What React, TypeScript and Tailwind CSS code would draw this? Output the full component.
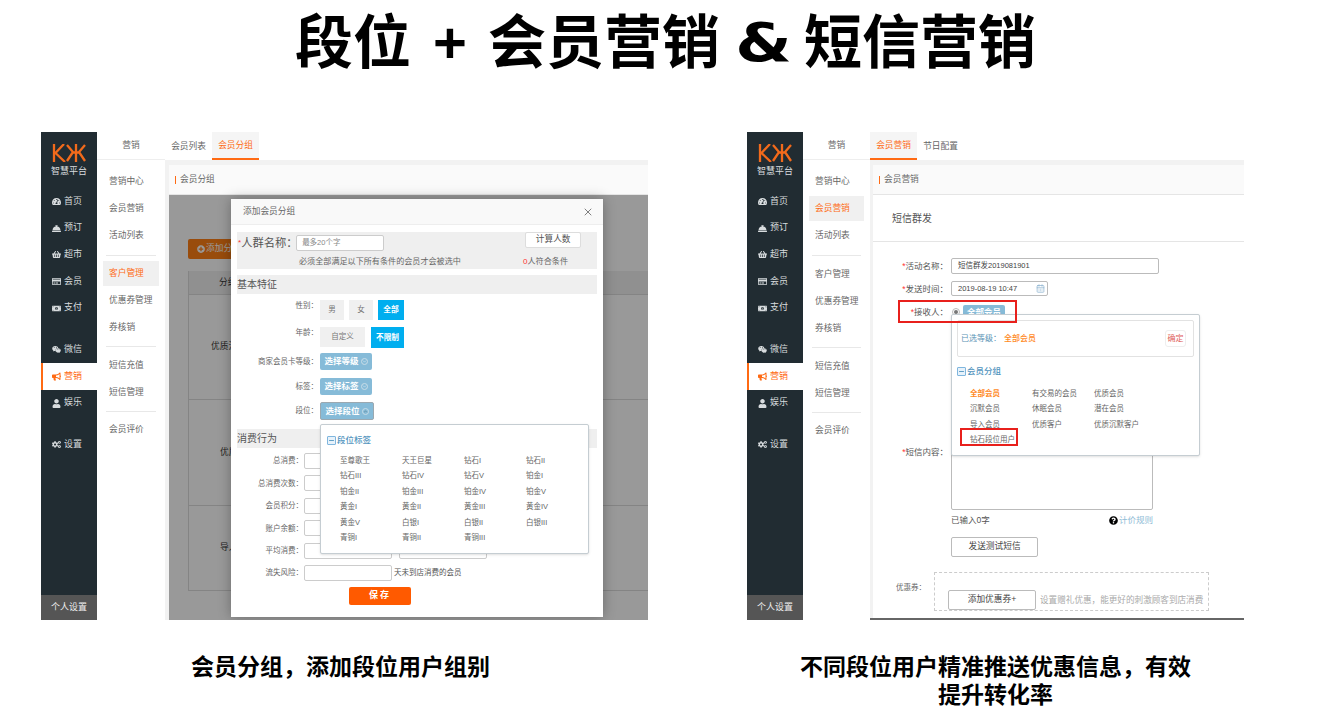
import React from 'react';
import {
  FaTachometerAlt,
  FaConciergeBell,
  FaShoppingBasket,
  FaRegCreditCard,
  FaMoneyBillAlt,
  FaWeixin,
  FaBullhorn,
  FaUser,
  FaCogs,
  FaQuestionCircle,
  FaPlusCircle,
} from 'react-icons/fa';
import { ChevronDown, ChevronUp, Minus, X, CalendarDays } from 'lucide-react';

const navGroups = [
  [
    { label: '首页', icon: FaTachometerAlt },
    { label: '预订', icon: FaConciergeBell },
    { label: '超市', icon: FaShoppingBasket },
    { label: '会员', icon: FaRegCreditCard },
    { label: '支付', icon: FaMoneyBillAlt },
  ],
  [
    { label: '微信', icon: FaWeixin },
    { label: '营销', icon: FaBullhorn, active: true },
    { label: '娱乐', icon: FaUser },
  ],
  [{ label: '设置', icon: FaCogs }],
];

const subGroups = [
  ['营销中心', '会员营销', '活动列表'],
  ['客户管理', '优惠券管理', '券核销'],
  ['短信充值', '短信管理'],
  ['会员评价'],
];

const ranks = [
  '至尊歌王', '天王巨星', '钻石I', '钻石II',
  '钻石III', '钻石IV', '钻石V', '铂金I',
  '铂金II', '铂金III', '铂金IV', '铂金V',
  '黄金I', '黄金II', '黄金III', '黄金IV',
  '黄金V', '白银I', '白银II', '白银III',
  '青铜I', '青铜II', '青铜III',
];

const memberGroups = [
  '全部会员', '有交易的会员', '优质会员',
  '沉默会员', '休眠会员', '潜在会员',
  '导入会员', '优质客户', '优质沉默客户',
  '钻石段位用户',
];

function Sidebar() {
  return (
    <div className="w-14 shrink-0 bg-[#212c32] flex flex-col text-[9px] text-[#d8dcde]">
      <div className="h-[56px] flex flex-col items-center pt-3">
        <svg width="34" height="18" viewBox="0 0 34 18" fill="none" stroke="#f26a1b" strokeWidth="2.3">
          <path d="M2 0V18M12 0L3.5 9L13 18" />
          <path d="M15 1L21 8L15 17M33 1L27 8L33 17M24 0V18M20 8.5H28" />
        </svg>
        <span className="mt-[3px] text-[9px] leading-3 text-[#d8dcde]">智慧平台</span>
      </div>
      {navGroups.map((group, i) => (
        <div key={i} className="mb-[15px]">
          {group.map((item) => {
            const Icon = item.icon;
            return (
              <div
                key={item.label}
                className={
                  item.active
                    ? 'h-[26.7px] flex items-center gap-[3px] pl-[9px] border-l-2 border-[#ff6a13] bg-white text-[#ff6a13]'
                    : 'h-[26.7px] flex items-center gap-[3px] pl-[11px]'
                }
              >
                <Icon className="w-[9px] h-[9px]" />
                <span>{item.label}</span>
              </div>
            );
          })}
        </div>
      ))}
      <div className="mt-auto h-[25px] pt-[1px] bg-[#555555] flex items-center justify-center text-[#eeeeee]">个人设置</div>
    </div>
  );
}

function SubNav({ active, width }: { active: string; width: string }) {
  return (
    <div className={`${width} shrink-0 bg-white text-[8.7px] text-[#666666]`}>
      <div className="h-7 flex items-center justify-center border-b border-[#eeeeee]">营销</div>
      <div className="pt-2">
        {subGroups.map((group, i) => (
          <div key={i} className="mx-[9px] border-b border-[#e8e8e8] last:border-b-0 last:-mt-[1px] first:pb-[6px] mb-[5px] pb-[5px]">
            {group.map((name) => (
              <div
                key={name}
                className={
                  name === active
                    ? '-mx-[3px] pl-[6px] h-[25px] my-[1px] flex items-center bg-[#f0f0f0] text-[#ff6a13]'
                    : 'pl-[3px] h-[27px] flex items-center whitespace-nowrap'
                }
              >
                {name}
              </div>
            ))}
          </div>
        ))}
      </div>
    </div>
  );
}

function Tabs({ items, active }: { items: string[]; active: string }) {
  return (
    <div className="h-7 bg-white flex text-[8.7px] text-[#666666]">
      {items.map((tab) => (
        <div
          key={tab}
          className={
            tab === active
              ? 'w-[47px] pt-[1px] flex items-center justify-center bg-[#f5f5f5] text-[#ff6a13] border-b-2 border-[#ff6a13]'
              : 'w-[47px] pt-[1px] flex items-center justify-center'
          }
        >
          {tab}
        </div>
      ))}
    </div>
  );
}

function CardHeader({ title }: { title: string }) {
  return (
    <div className="h-[30px] pt-[1px] flex items-center gap-[4px] pl-[6px] bg-[#fafafa] border-b border-[#e5e5e5] text-[8.7px] text-[#666666]">
      <span className="w-[1px] h-[8px] bg-[#ff6a13]" />
      {title}
    </div>
  );
}

function FormLabel({ children }: { children: React.ReactNode }) {
  return <div className="w-[81px] shrink-0 text-right text-[7.5px] text-[#666666] whitespace-nowrap">{children}</div>;
}

function SpendRow({ label, second, note }: { label: string; second?: boolean; note?: string }) {
  return (
    <div className="flex items-center">
      <div className="w-[66px] shrink-0 text-right text-[7.5px] text-[#666666] whitespace-nowrap">{label}：</div>
      <div className="ml-[1px] w-[88px] h-4 rounded-[2px] border border-[#cccccc] bg-white" />
      {second && <div className="ml-[7px] w-[88px] h-4 rounded-[2px] border border-[#cccccc] bg-white" />}
      {note && <span className="ml-[2px] text-[7.5px] text-[#555555] whitespace-nowrap">{note}</span>}
    </div>
  );
}

function SelectButton({ label, open }: { label: string; open?: boolean }) {
  return (
    <div
      className={
        open
          ? 'ml-[2px] w-[54px] h-[18px] rounded-[2px] bg-[#86bbd8] border border-[#9ba8b0] flex items-center justify-center gap-[2px] text-[8.5px] font-bold text-white'
          : 'ml-[2px] w-[52px] h-[17px] rounded-[2px] bg-[#86bbd8] flex items-center justify-center gap-[2px] text-[8.5px] font-bold text-white'
      }
    >
      {label}
      <span className="w-[7px] h-[7px] rounded-full border border-[#c8dde8] flex items-center justify-center">
        {open ? <ChevronUp className="w-[5px] h-[5px] text-[#44606e]" /> : <ChevronDown className="w-[5px] h-[5px]" />}
      </span>
    </div>
  );
}

function TreeHeading({ label }: { label: string }) {
  return (
    <div className="flex items-center gap-[1px] text-[8.5px] font-medium text-[#4f93bd]">
      <span className="w-[9px] h-[9px] rounded-[1px] border border-[#7fb6de] bg-[#e7f2fb] flex items-center justify-center">
        <Minus className="w-[7px] h-[7px]" strokeWidth={3} />
      </span>
      {label}
    </div>
  );
}

function GroupModal() {
  return (
    <div className="absolute left-[62px] top-1 w-[372px] h-[418px] bg-white shadow-[0_0_12px_rgba(0,0,0,0.3)]">
      <div className="h-[26px] pt-[1px] flex items-center justify-between pl-3 pr-[9px] bg-[#f9f9f9] border-b border-[#eeeeee] text-[8.7px] text-[#666666]">
        添加会员分组
        <X className="w-3 h-3 text-[#555555]" strokeWidth={1.5} />
      </div>

      <div className="mx-[6px] mt-[7px]">
        <div className="h-[37px] bg-[#efefef] relative">
          <div className="flex items-start pl-[1px] pt-[2px]">
            <span className="text-[#ff3333] text-[8px] mt-[3px]">*</span>
            <span className="w-[55px] text-[11.3px] leading-4 mt-[1px] text-[#555555] whitespace-nowrap">人群名称：</span>
            <div className="mt-[1px] w-[88px] h-4 bg-white border border-[#cccccc] rounded-[2px] pl-[5px] text-[7.5px] leading-[14px] text-[#888888]">最多20个字</div>
            <div className="ml-[141px] -mt-[2px] w-14 h-4 bg-white border border-[#dddddd] rounded-[2px] flex items-center justify-center text-[8.7px] text-[#555555]">计算人数</div>
          </div>
          <div className="absolute left-[62px] bottom-[1px] text-[8.1px] text-[#666666] whitespace-nowrap">必须全部满足以下所有条件的会员才会被选中</div>
          <div className="absolute left-[286px] bottom-[1px] text-[8.1px] text-[#666666] whitespace-nowrap">
            <span className="text-[#ff3333]">0</span>人符合条件
          </div>
        </div>

        <div className="mt-[6px] h-[19px] bg-[#efefef] flex items-center text-[10px] text-[#555555]">基本特征</div>

        <div className="mt-[6px] flex items-start">
          <FormLabel>性别：</FormLabel>
          <div className="ml-[2px] w-6 h-5 bg-[#f0f0f0] flex items-center justify-center text-[7.5px] text-[#777777]">男</div>
          <div className="ml-[5px] w-6 h-5 bg-[#f0f0f0] flex items-center justify-center text-[7.5px] text-[#777777]">女</div>
          <div className="ml-[5px] w-[26px] h-5 bg-[#00aeef] flex items-center justify-center text-[7.7px] font-bold text-white">全部</div>
        </div>
        <div className="mt-[7px] flex items-start">
          <FormLabel>年龄：</FormLabel>
          <div className="ml-[2px] w-[45px] h-5 bg-[#f0f0f0] flex items-center justify-center text-[7.5px] text-[#777777]">自定义</div>
          <div className="ml-[6px] w-[33px] h-[21px] bg-[#00aeef] flex items-center justify-center text-[7.7px] font-bold text-white">不限制</div>
        </div>
        <div className="mt-[5px] flex items-center">
          <FormLabel>商家会员卡等级：</FormLabel>
          <SelectButton label="选择等级" />
        </div>
        <div className="mt-[8px] flex items-center">
          <FormLabel>标签：</FormLabel>
          <SelectButton label="选择标签" />
        </div>
        <div className="mt-[7px] flex items-center">
          <FormLabel>段位：</FormLabel>
          <SelectButton label="选择段位" open />
        </div>

        <div className="mt-[9px] h-[19px] bg-[#efefef] flex items-center text-[10px] text-[#555555]">消费行为</div>

        <div className="mt-[5px] flex flex-col gap-[6.4px]">
          <SpendRow label="总消费" second />
          <SpendRow label="总消费次数" second />
          <SpendRow label="会员积分" second />
          <SpendRow label="账户余额" second />
          <SpendRow label="平均消费" second />
          <SpendRow label="流失风险" note="天未到店消费的会员" />
        </div>

        <div className="mt-[6px] ml-[112px] w-[62px] h-[18px] rounded-[2px] bg-[#ff5a00] flex items-center justify-center text-[9px] font-bold tracking-[2px] text-white">保存</div>
      </div>

      <div className="absolute left-[89px] top-[225px] w-[269px] h-[130px] bg-white border border-[#c5cdd2] rounded-[2px] shadow-sm pl-[6px] pt-[9px]">
        <TreeHeading label="段位标签" />
        <div className="mt-[6px] ml-[13px] grid grid-cols-[repeat(4,62px)] auto-rows-[15.5px] items-center text-[7.5px] text-[#666666]">
          {ranks.map((rank) => (
            <div key={rank}>{rank}</div>
          ))}
        </div>
      </div>
    </div>
  );
}

function GroupScreen() {
  return (
    <div className="w-[607px] h-[488px] flex overflow-hidden">
      <Sidebar />
      <SubNav active="客户管理" width="w-[68px]" />
      <div className="flex-1 flex flex-col bg-[#f2f2f2]">
        <Tabs items={['会员列表', '会员分组']} active="会员分组" />
        <div className="flex-1 mt-[5px] ml-1 flex flex-col relative bg-white">
          <CardHeader title="会员分组" />
          <div className="flex-1 pl-[19px] pt-[44px] text-[8.7px] text-[#333333]">
            <div className="w-[60px] h-5 rounded-[2px] bg-[#ff7f14] text-white flex items-center gap-[1px] pl-[9px] whitespace-nowrap">
              <FaPlusCircle className="w-2 h-2" />
              添加分
            </div>
            <div className="mt-3 border-l border-[#dddddd]">
              <div className="h-6 bg-[#f0f0f0] border-b border-[#dddddd] flex items-center pl-[30px]">分组</div>
              <div className="h-[105px] border-b border-[#dddddd] flex items-center pl-[22px]">优质沉</div>
              <div className="h-[106px] border-b border-[#dddddd] flex items-center pl-[31px]">优质</div>
              <div className="h-[85px] border-b border-[#dddddd] flex items-center pl-[31px]">导入</div>
            </div>
          </div>
          <div className="absolute inset-x-0 bottom-0 top-[30px] bg-black/40" />
          <div className="absolute inset-x-0 bottom-0 top-[30px]">
            <GroupModal />
          </div>
        </div>
      </div>
    </div>
  );
}

function SmsRow({ label, children }: { label: string; children: React.ReactNode }) {
  return (
    <div className="flex">
      <div className="w-[78px] shrink-0 pr-[3px] text-right text-[8.5px] leading-4 text-[#555555] whitespace-nowrap">
        <span className="text-[#ff3333]">*</span>
        {label}：
      </div>
      {children}
    </div>
  );
}

function SmsScreen() {
  return (
    <div className="w-[497px] h-[488px] flex overflow-hidden">
      <Sidebar />
      <SubNav active="会员营销" width="w-[67px]" />
      <div className="flex-1 flex flex-col bg-[#f2f2f2] border-b-2 border-[#666666]">
        <Tabs items={['会员营销', '节日配置']} active="会员营销" />
        <div className="flex-1 mt-[5px] ml-[3px] bg-white flex flex-col relative">
          <CardHeader title="会员营销" />
          <div className="h-[47px] shrink-0 pt-[1px] flex items-center pl-[19px] border-b border-[#e5e5e5] text-[10px] text-[#555555]">短信群发</div>

          <div className="pt-4 relative">
            <SmsRow label="活动名称">
              <div className="w-[208px] h-4 rounded-[2px] border border-[#bbbbbb] pl-[6px] text-[7.5px] leading-[14px] text-[#444444]">短信群发2019081901</div>
            </SmsRow>
            <div className="mt-[7px]">
              <SmsRow label="发送时间">
                <div className="w-[97px] h-[15px] rounded-[2px] border border-[#bbbbbb] pl-[6px] pr-[2px] flex items-center justify-between text-[7.5px] text-[#444444]">
                  2019-08-19 10:47
                  <CalendarDays className="w-[9px] h-[9px] text-[#8fb4d0]" />
                </div>
              </SmsRow>
            </div>
            <div className="mt-[7px]">
              <SmsRow label="接收人">
                <div className="h-4 flex items-center pl-[1px]">
                  <span className="w-[8px] h-[8px] rounded-full border border-[#bbbbbb] flex items-center justify-center">
                    <span className="w-1 h-1 rounded-full bg-[#777777]" />
                  </span>
                  <span className="ml-[3px] w-[42px] h-[14px] rounded-[2px] bg-[#86bbd8] flex items-center justify-center text-[8.5px] font-bold text-white">全部会员</span>
                </div>
              </SmsRow>
            </div>
            <div className="mt-[124px]">
              <SmsRow label="短信内容">
                <div className="w-[202px] h-[66px] border border-[#bbbbbb] rounded-[2px]" />
              </SmsRow>
            </div>
            <div className="mt-1 ml-[78px] w-[202px] h-3 flex items-center text-[8.5px] text-[#555555] whitespace-nowrap">
              已输入0字
              <FaQuestionCircle className="ml-auto w-[9px] h-[9px] text-black" />
              <span className="ml-[1px] text-[#8fbcd6]">计价规则</span>
            </div>
            <div className="mt-[11px] ml-[78px] w-[87px] h-5 rounded-[2px] border border-[#bbbbbb] flex items-center justify-center text-[8.7px] text-[#444444]">发送测试短信</div>

            <div className="mt-[15px] flex">
              <div className="w-[61px] pl-[23px] pt-[10px] text-[7.5px] text-[#666666] whitespace-nowrap">优惠券：</div>
              <div className="w-[275px] h-[39px] border border-dashed border-[#cccccc] flex items-end pl-[13px]">
                <div className="w-[88px] h-5 shrink-0 rounded-[2px] border border-[#bbbbbb] flex items-center justify-center text-[8.7px] text-[#444444]">添加优惠券+</div>
                <span className="ml-[4px] mb-[3px] text-[8.6px] text-[#aaaaaa] whitespace-nowrap">设置赠礼优惠，能更好的刺激顾客到店消费</span>
              </div>
            </div>

            {/* recipient picker, floats over the text area */}
            <div className="absolute left-[78px] top-[72px] w-[249px] h-[142px] bg-white border border-[#c5cdd2] rounded-[2px] shadow-sm px-[5px] pt-[5px]">
              <div className="h-[37px] border border-[#e2e2e2] rounded-[2px] flex items-center pl-[3px] pr-[7px] text-[8px]">
                <span className="text-[#5a93b5]">已选等级：</span>
                <span className="ml-[3px] font-medium text-[#ff8a1f]">全部会员</span>
                <span className="ml-auto w-[21px] h-[17px] rounded-[3px] border border-[#eeeeee] flex items-center justify-center text-[#e0605a]">确定</span>
              </div>
              <div className="mt-[8px]">
                <TreeHeading label="会员分组" />
              </div>
              <div className="mt-[8px] ml-[13px] grid grid-cols-[repeat(3,62px)] auto-rows-[15.5px] items-center text-[7.5px] text-[#666666]">
                {memberGroups.map((name) => (
                  <div key={name} className={name === '全部会员' ? 'font-bold text-[#ff8a1f] whitespace-nowrap' : 'whitespace-nowrap'}>
                    {name}
                  </div>
                ))}
              </div>
            </div>

            {/* red callouts from the slide */}
            <div className="absolute left-[25px] top-[58px] w-[119px] h-[23px] border-2 border-[#e8201c]" />
            <div className="absolute left-[87px] top-[186px] w-[58px] h-[18px] border-2 border-[#e8201c]" />
          </div>
        </div>
      </div>
    </div>
  );
}

export default function App() {
  return (
    <div className="w-[1342px] h-[723px] overflow-hidden bg-white font-['Liberation_Sans','Noto_Sans_CJK_SC',sans-serif]">
      <h1 className="h-[132px] pt-[7px] pr-[11px] flex justify-center text-[58px] leading-[72px] font-bold text-black whitespace-nowrap">
        <span>段位</span>
        <span className="ml-[22px]">+</span>
        <span className="ml-[21px]">会员营销</span>
        <span className="ml-[17px] w-[53px] flex justify-center text-[54px] font-['DejaVu_Sans'] scale-x-[1.2]">&amp;</span>
        <span className="ml-[14px]">短信营销</span>
      </h1>
      <div className="flex pl-[41px] gap-[99px]">
        <div className="w-[607px]">
          <GroupScreen />
          <p className="pt-[33px] pr-2 text-center text-[23px] leading-7 font-bold text-black">会员分组，添加段位用户组别</p>
        </div>
        <div className="w-[497px]">
          <SmsScreen />
          <p className="pt-[33px] text-center text-[23px] leading-7 font-bold text-black">
            不同段位用户精准推送优惠信息，有效
            <br />
            提升转化率
          </p>
        </div>
      </div>
    </div>
  );
}
